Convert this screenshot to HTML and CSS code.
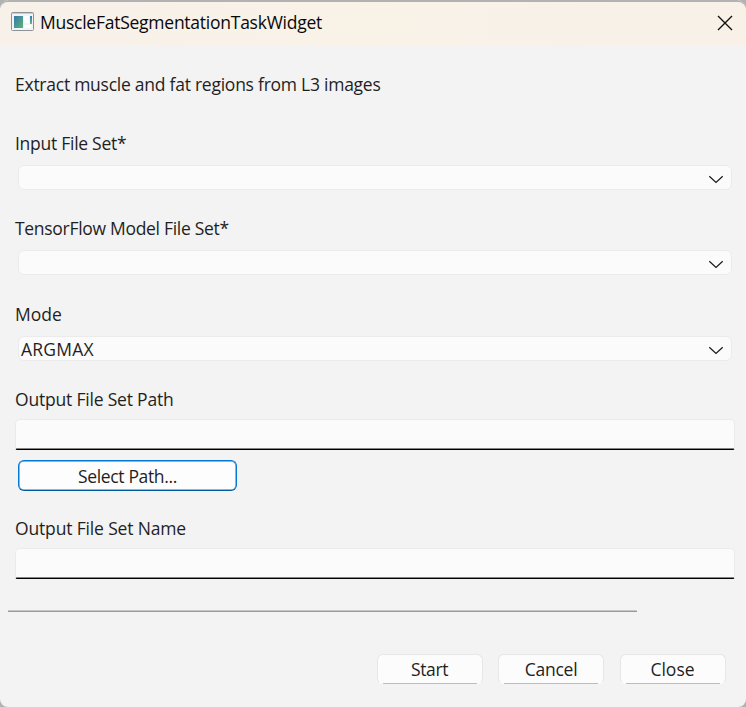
FILE: index.html
```
<!DOCTYPE html>
<html lang="en">
<head>
<meta charset="utf-8">
<title>MuscleFatSegmentationTaskWidget</title>
<link rel="stylesheet" href="styles.css">
</head>
<body>
<main class="window">
  <header class="titlebar">
    <svg class="app-icon" width="23" height="19" viewBox="0 0 23 19">
      <defs>
        <linearGradient id="pane" x1="0" y1="0" x2="1" y2="1"><stop offset="0" stop-color="#3b78ac"/><stop offset="1" stop-color="#54b679"/></linearGradient>
        <linearGradient id="strip" x1="0" y1="0" x2="0" y2="1"><stop offset="0" stop-color="#3b78b4"/><stop offset="1" stop-color="#63b981"/></linearGradient>
      </defs>
      <rect x=".5" y=".5" width="22" height="18" rx="1" fill="#f3f4f6" stroke="#8c9298"/>
      <path d="M1 1.5h21" stroke="#c9ced3"/>
      <rect x="3" y="4" width="9" height="12" fill="url(#pane)"/>
      <path d="M13 4h5v7h-5zM13 13h7v3h-7z" fill="#fff"/>
      <rect x="19" y="4" width="2" height="8" fill="url(#strip)"/>
    </svg>
    <h1 class="title"><span class="t-title">MuscleFatSegmentationTaskWidget</span></h1>
    <svg class="close" width="16" height="16" viewBox="0 0 16 16"><path d="M1 1l14 14M15 1L1 15" fill="none" stroke="#111" stroke-width="1.4"/></svg>
  </header>
  <form class="form">
    <p class="label intro"><span class="t-intro">Extract muscle and fat regions from L3 images</span></p>
    <div class="label"><span class="t-input">Input File Set*</span></div>
    <div class="combo"><span></span><svg width="16" height="9" viewBox="0 0 16 9"><path d="M1.3 1.2L8 7.5l6.7-6.3" fill="none" stroke="#191919" stroke-width="1.2"/></svg></div>
    <div class="label model"><span class="t-model">TensorFlow Model File Set*</span></div>
    <div class="combo"><span></span><svg width="16" height="9" viewBox="0 0 16 9"><path d="M1.3 1.2L8 7.5l6.7-6.3" fill="none" stroke="#191919" stroke-width="1.2"/></svg></div>
    <div class="label mode"><span class="t-mode">Mode</span></div>
    <div class="combo"><span class="t-argmax">ARGMAX</span><svg width="16" height="9" viewBox="0 0 16 9"><path d="M1.3 1.2L8 7.5l6.7-6.3" fill="none" stroke="#191919" stroke-width="1.2"/></svg></div>
    <div class="label path"><span class="t-path">Output File Set Path</span></div>
    <div class="edit"></div>
    <div class="select"><span class="t-select">Select Path...</span></div>
    <div class="label name"><span class="t-name">Output File Set Name</span></div>
    <div class="edit"></div>
  </form>
  <div class="progress"></div>
  <footer class="actions">
    <div class="button"><span class="t-start">Start</span></div>
    <div class="button"><span class="t-cancel">Cancel</span></div>
    <div class="button"><span class="t-close">Close</span></div>
  </footer>
</main>
</body>
</html>
```
FILE: styles.css
```
* { box-sizing: border-box; }
body {
  margin: 0;
  background: #b2b2b3;
  color: #1f1f1f;
  font: 400 17.5px/24px "Open Sans", "Noto Sans", sans-serif;
}
.window {
  height: 707px;
  padding-top: 2px;
  background: #f3f3f3;
  border-radius: 9px 9px 8px 8px;
  overflow: hidden;
  box-shadow: inset 0 2px #b2b2b3;
}
.titlebar {
  display: flex;
  align-items: center;
  height: 43px;
  padding: 0 13px 3px 11px;
  background: linear-gradient(100deg, #f8f1ea, #f8f2e7 50%, #f9f1e8);
  border-radius: 8px 8px 0 0;
}
.app-icon { display: block; margin-bottom: 1px; }
.close { margin-top: 1px; }
.title { flex: 1; margin: 0 0 0 6px; font-size: inherit; font-weight: inherit; color: #080808; }
.form { padding: 28px 11px 0 15px; }
.label { height: 24px; margin: 0 0 9px; line-height: 22px; white-space: nowrap; }
.label span, .combo span, .select span, .button span, .title span { display: inline-block; white-space: nowrap; }
.label.intro { margin-bottom: 35px; }
.label.model { margin-top: 27px; }
.label.mode { margin-top: 28px; }
.label.path { margin: 27px 0 7px; }
.label.name { margin: 26px 0 7px; }
.combo {
  display: flex;
  align-items: center;
  justify-content: space-between;
  height: 25px;
  margin: 0 3px;
  padding: 0 7px 0 2px;
  background: #fbfbfb;
  border: 1px solid #ebebeb;
  border-radius: 6px;
}
.combo svg { margin-top: 3px; }
.edit {
  height: 31px;
  width: 720px;
  background: linear-gradient(#858585, #858585) 0 100% / 718px 1px no-repeat, #fbfbfb;
  border: 1px solid #ebebeb;
  border-bottom: 1px solid #000;
  border-radius: 5px 5px 2px 2px;
}
.select {
  width: 219px;
  height: 31px;
  margin: 10px 0 0 3px;
  line-height: 31px;
  text-align: center;
  background: #fdfdfd;
  border: 1px solid #0078d4;
  border-bottom-color: #005a9e;
  border-radius: 6px;
  box-shadow: inset 0 0 0 .5px #0078d4;
}
.progress { width: 629px; height: 2px; margin: 31px 0 0 8px; background: linear-gradient(#c8c8c8 50%, #999 50%); }
.actions { display: flex; justify-content: flex-end; gap: 15.5px; margin-top: 42px; padding-right: 20.5px; }
.button {
  width: 106px;
  height: 30px;
  line-height: 29px;
  text-align: center;
  background: linear-gradient(#bdbdbd, #bdbdbd) center bottom / 94px 1px no-repeat border-box, #fcfcfc;
  border: 1px solid #e7e7e7;
  border-bottom-color: transparent;
  border-radius: 6px;
}
.t-title { letter-spacing: -.25px; }
.t-intro { letter-spacing: -.25px; }
.t-input { letter-spacing: -.27px; }
.t-model { letter-spacing: -.3px; }
.t-argmax { letter-spacing: .2px; }
.t-path { letter-spacing: -.2px; }
.t-name { letter-spacing: -.16px; }
.t-select { letter-spacing: -.36px; }
.t-start { letter-spacing: -.35px; }
.t-cancel { letter-spacing: -.25px; }
```
